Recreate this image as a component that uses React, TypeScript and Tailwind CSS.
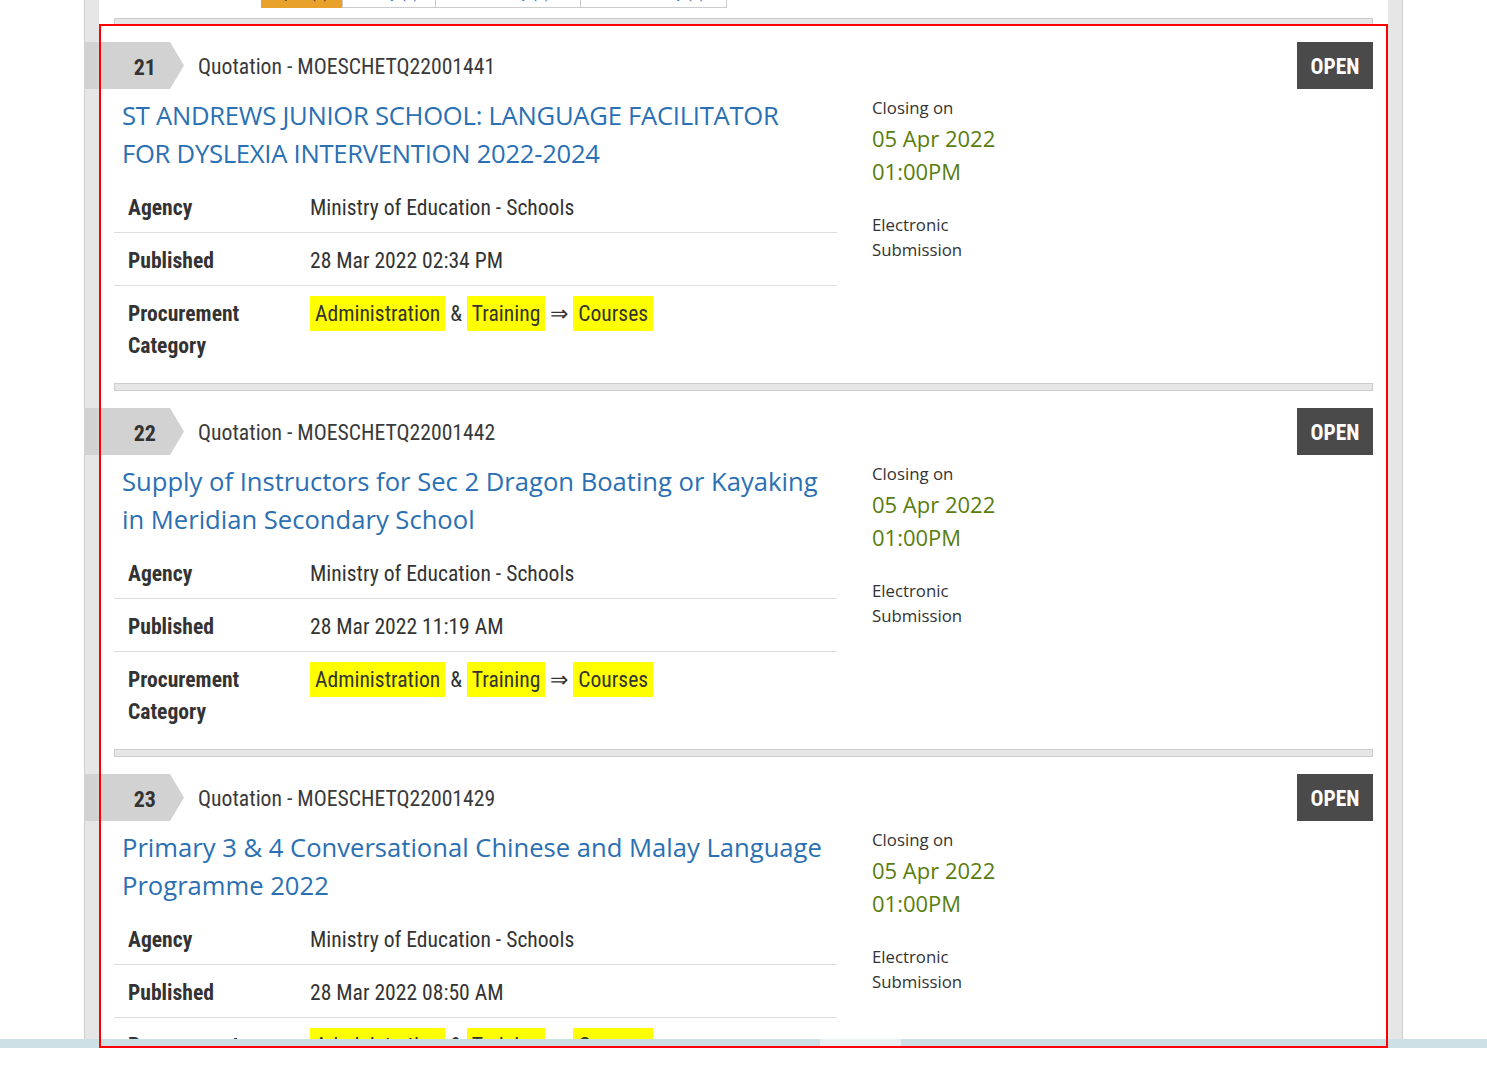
import React from "react";

type Tender = {
  no: number;
  ref: string;
  title: string;
  published: string;
  caps?: boolean;
};

const tenders: Tender[] = [
  {
    no: 21,
    ref: "Quotation - MOESCHETQ22001441",
    title: "ST ANDREWS JUNIOR SCHOOL: LANGUAGE FACILITATOR FOR DYSLEXIA INTERVENTION 2022-2024",
    published: "28 Mar 2022 02:34 PM",
    caps: true,
  },
  {
    no: 22,
    ref: "Quotation - MOESCHETQ22001442",
    title: "Supply of Instructors for Sec 2 Dragon Boating or Kayaking in Meridian Secondary School",
    published: "28 Mar 2022 11:19 AM",
  },
  {
    no: 23,
    ref: "Quotation - MOESCHETQ22001429",
    title: "Primary 3 & 4 Conversational Chinese and Malay Language Programme 2022",
    published: "28 Mar 2022 08:50 AM",
  },
];

const cond = "font-['Roboto_Condensed','Roboto',sans-serif] font-stretch-condensed";
const open = "font-['Open_Sans',sans-serif]";

function Bar() {
  return <div className="h-[8px] border border-[#cccccc] bg-[#e6e6e6]" />;
}

function Hl({ children }: { children: React.ReactNode }) {
  return <span className="bg-[#ffff00] px-[5px] py-[5px]">{children}</span>;
}

function TenderItem({ t }: { t: Tender }) {
  return (
    <div className="pt-[17px]">
      <div className="flex items-center h-[47px]">
        <div
          className={`${cond} ml-[-30px] h-[47px] w-[100px] bg-[#d2d2d2] [clip-path:polygon(0_0,86px_0,100px_50%,86px_100%,0_100%)] flex items-center justify-end pr-[28px] pt-[3px] text-[22px] font-bold text-[#333333]`}
        >
          {t.no}
        </div>
        <div className={`${cond} ml-[14px] pt-[3px] text-[21.7px] text-[#3a3a3a]`}>{t.ref}</div>
        <div
          className={`${cond} ml-auto h-[47px] w-[76px] bg-[#4a4a4a] flex items-center justify-center pt-[3px] text-[21.5px] font-bold text-white`}
        >
          OPEN
        </div>
      </div>
      <div className="flex mt-[8px]">
        <div className="w-[723px]">
          <a
            className={`${open} block pl-[8px] pr-[8px] text-[25.6px] leading-[38px] text-[#2a70b3] ${
              t.caps ? "tracking-[-0.25px]" : ""
            }`}
          >
            {t.title}
          </a>
          <div className={`${cond} mt-[7px] text-[21.6px] text-[#333333]`}>
            <div className="flex border-b border-[#dddddd] pt-[12px] pb-[8px] leading-[32px]">
              <div className="w-[196px] pl-[14px] font-bold">Agency</div>
              <div>Ministry of Education - Schools</div>
            </div>
            <div className="flex border-b border-[#dddddd] pt-[12px] pb-[8px] leading-[32px]">
              <div className="w-[196px] pl-[14px] font-bold">Published</div>
              <div>{t.published}</div>
            </div>
            <div className="flex pt-[12px] pb-[8px] leading-[32px]">
              <div className="w-[196px] pl-[14px] font-bold">
                Procurement
                <br />
                Category
              </div>
              <div>
                <Hl>Administration</Hl> &amp; <Hl>Training</Hl> ⇒ <Hl>Courses</Hl>
              </div>
            </div>
          </div>
        </div>
        <div className={`${open} ml-[35px] w-[140px] mt-[-3px] text-[#333333]`}>
          <div className="text-[16.8px] leading-[28px]">Closing on</div>
          <div className="text-[22px] leading-[33px] text-[#5a7d0e]">05 Apr 2022 01:00PM</div>
          <div className="mt-[24px] text-[16.8px] leading-[25px]">Electronic Submission</div>
        </div>
      </div>
      <div className="mt-[13px]">
        <Bar />
      </div>
    </div>
  );
}

export default function App() {
  return (
    <div className="w-full h-[1073px] bg-white overflow-hidden">
      <div className="relative h-[1048px] overflow-hidden">
        <div className="flow-root ml-[84px] w-[1319px] h-full border-x border-[#cfcfcf] bg-[#e6e6e6] px-[14px]">
          <div className="flow-root h-full bg-white px-[15px]">
            <div className={`${cond} flex ml-[147px] mt-[-32px] text-[16px] text-[#337ab7]`}>
              <div className="w-[81px] h-[40px] bg-[#e8a22b] text-[#333333] flex items-end justify-center pb-[7px] leading-none">
                Open (3)
              </div>
              <div className="w-[94px] h-[40px] border border-[#cccccc] flex items-end justify-center pb-[6px] leading-none">
                Today (0)
              </div>
              <div className="w-[145px] h-[40px] border-y border-r border-[#cccccc] flex items-end justify-center pb-[6px] leading-none">
                Yesterday (0)
              </div>
              <div className="w-[146px] h-[40px] border-y border-r border-[#cccccc] flex items-end justify-center pb-[6px] leading-none">
                Last Monday (0)
              </div>
            </div>
            <div className="mt-[10px]">
              <div className="h-[7px] border-x border-t border-[#cccccc] bg-[#e6e6e6]" />
            </div>
            {tenders.map((t) => (
              <TenderItem key={t.no} t={t} />
            ))}
          </div>
        </div>
        <div className="absolute left-0 right-0 bottom-0 h-[9px] bg-[#cde0e5] flex">
          <div className="ml-[820px] w-[81px] h-full bg-[#e8f0f2]" />
        </div>
        <div className="absolute left-[99px] right-[99px] top-[24px] bottom-0 border-2 border-[#ff0000] pointer-events-none" />
      </div>
    </div>
  );
}
